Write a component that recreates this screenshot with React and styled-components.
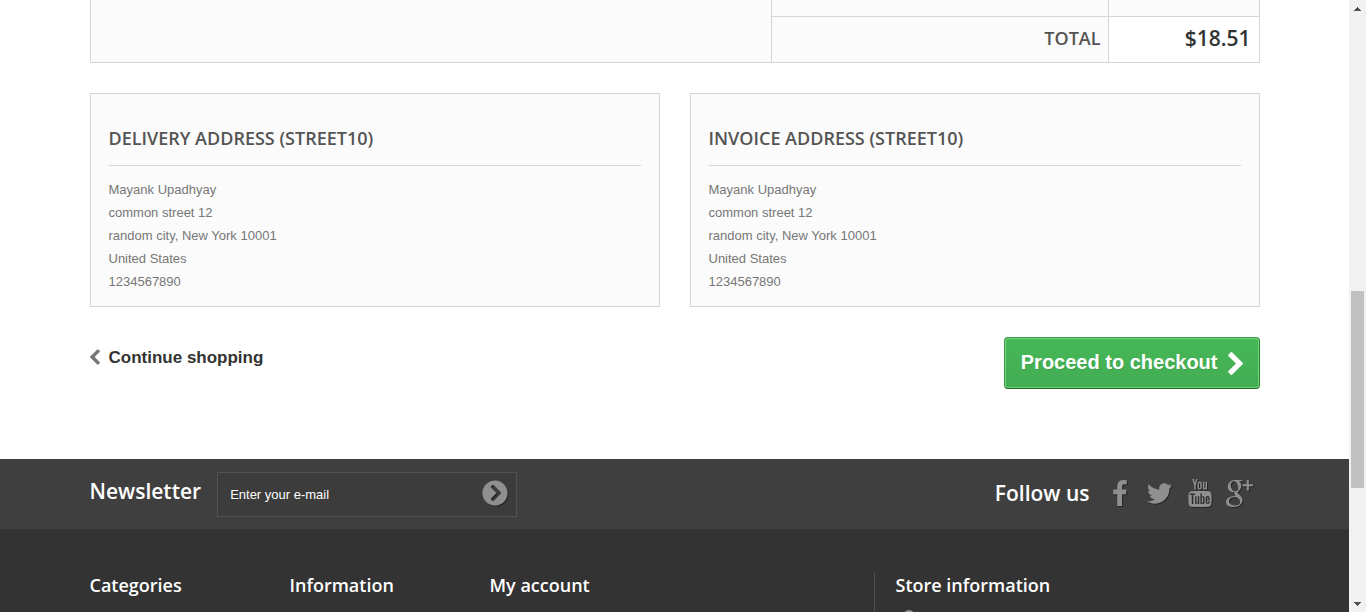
import React from "react";
import styled, { createGlobalStyle } from "styled-components";
import {
  FaTwitter,
  FaChevronCircleRight,
  FaMapMarkerAlt,
} from "react-icons/fa";
import { TfiYoutube, TfiGoogle } from "react-icons/tfi";

const sans = '"Liberation Sans", Arial, Helvetica, sans-serif';
const display = '"Open Sans", "Noto Sans", sans-serif';
const line = "#d6d4d4";

const GlobalStyle = createGlobalStyle`
  *, *::before, *::after { box-sizing: border-box; }
  body {
    margin: 0;
    background: #fff;
    color: #777;
    font: normal 13px/18px ${sans};
  }
  h3, h4, p { margin: 0; }
`;

const Shell = styled.div`
  display: flex;
  height: 100vh;
  overflow: hidden;
`;

const Page = styled.div`
  flex: 1;
  min-width: 0;
  overflow: hidden;
`;

const Container = styled.div`
  max-width: 1170px;
  margin: 0 auto;
`;

const Main = styled.main`
  padding-bottom: 70px;
`;

const SummaryTable = styled.table`
  width: 100%;
  margin-top: -20px;
  table-layout: fixed;
  border-collapse: collapse;
  border: 1px solid ${line};
  background: #fbfbfb;
`;

const Column = styled.col`
  width: ${(p) => p.$width};
`;

const Cell = styled.td`
  height: ${(p) => (p.$total ? "46px" : "36px")};
  padding: ${(p) => (p.$total ? "0 8px 2px" : "0 9px 8px")};
  border: 1px solid ${line};
  text-align: right;
  vertical-align: middle;
  background: ${(p) => (p.$total ? "#fff" : "#fbfbfb")};
  font: ${(p) => (p.$total ? `600 21px/25px ${display}` : `13px/18px ${sans}`)};
  color: ${(p) => (p.$total ? "#333" : "#777")};
`;

const TotalLabel = styled.th`
  padding: 0 7px 4px;
  border: 1px solid ${line};
  text-align: right;
  font: 600 18px/22px ${display};
  color: #555454;
`;

const Addresses = styled.div`
  display: grid;
  grid-template-columns: 1fr 1fr;
  gap: 30px;
  margin: 30px 0;
`;

const AddressBox = styled.section`
  padding: 33px 18px 13px;
  border: 1px solid ${line};
  background: #fbfbfb;
  line-height: 23px;
`;

const AddressTitle = styled.h3`
  margin-bottom: 12px;
  padding-bottom: 16px;
  border-bottom: 1px solid ${line};
  font: 600 18px/22px ${display};
  color: #555454;
`;

const Actions = styled.div`
  display: flex;
  justify-content: space-between;
  align-items: flex-start;
`;

const ContinueLink = styled.a`
  display: flex;
  align-items: center;
  gap: 9px;
  padding-top: 10px;
  font: bold 17px/21px ${sans};
  color: #333;
  text-decoration: none;

  svg { margin-bottom: 2px; color: #777; }
`;

const CheckoutButton = styled.button`
  display: flex;
  align-items: center;
  gap: 10px;
  height: 52px;
  padding: 0 16px 2px;
  border: 1px solid;
  border-color: #399a49 #247f32 #1a6d27 #399a49;
  border-radius: 4px;
  background: linear-gradient(#46b857, #43ac53);
  box-shadow: inset 0 0 0 1px #74d578;
  font: bold 20px/24px ${sans};
  color: #fff;
  text-shadow: 1px 1px rgba(0, 0, 0, 0.1);

  svg { margin-top: 2px; }
`;

const NewsletterBar = styled.div`
  background: #3f3f3f;
`;

const BarRow = styled(Container)`
  display: flex;
  justify-content: space-between;
  height: 70px;
`;

const NewsletterForm = styled.form`
  display: flex;
  align-items: flex-start;
  gap: 16px;
  padding-top: 13px;
`;

const BarTitle = styled.label`
  padding-top: 7px;
  font: 600 21px/25px ${display};
  color: #fff;
`;

const EmailField = styled.div`
  display: flex;
  align-items: center;
  width: 300px;
  height: 45px;
  padding: 0 8px 4px 12px;
  border: 1px solid #515151;
  background: #3c3c3c;
`;

const EmailInput = styled.input`
  flex: 1;
  min-width: 0;
  padding: 5px 0 0;
  border: 0;
  outline: 0;
  background: transparent;
  font: 13px/18px ${sans};
  color: #fff;

  &::placeholder { color: #fff; opacity: 1; }
`;

const SendButton = styled.button`
  display: flex;
  padding: 0;
  border: 0;
  background: none;
  color: #908f8f;

  svg { filter: drop-shadow(1px 1px 0 rgba(0, 0, 0, 0.4)); }
`;

const Social = styled.div`
  display: flex;
  align-items: center;
  padding-bottom: 2px;
`;

const SocialTitle = styled.h4`
  margin-right: 10px;
  font: 600 21px/25px ${display};
  color: #fff;
`;

const SocialLink = styled.a`
  display: flex;
  justify-content: center;
  width: 40px;
  color: #908f8f;

  svg { filter: drop-shadow(1px 1px 0 rgba(0, 0, 0, 0.4)); }
`;

const Footer = styled.div`
  min-height: 100px;
  padding-top: 44px;
  background: #333;
`;

const FooterGrid = styled(Container)`
  display: grid;
  grid-template-columns: 200px 200px 1fr 386px;
`;

const FooterColumn = styled.section`
  ${(p) => p.$divided && "border-left: 1px solid #515151; padding-left: 21px;"}
  color: #908f8f;
`;

const FooterTitle = styled.h4`
  padding-bottom: 13px;
  font: 600 18px/24px ${display};
  color: #fff;
`;

const StoreMark = styled.div`
  display: flex;
  padding-left: 5px;
`;

const ScrollBar = styled.div`
  display: flex;
  flex-direction: column;
  flex: none;
  width: 17px;
  background: #f1f1f1;
`;

const ScrollArrow = styled.svg`
  flex: none;
  width: 17px;
  height: 17px;
  fill: #505050;
`;

const Track = styled.div`
  flex: ${(p) => p.$share} 0 0;
`;

const Thumb = styled(Track)`
  margin: 0 2px;
  background: #c1c1c1;
`;

const ChevronLeft = () => (
  <svg width="10" height="16" viewBox="410 26 1036 1612" fill="currentColor" aria-hidden="true">
    <path d="M1427 301l-531 531 531 531q19 19 19 45t-19 45l-166 166q-19 19-45 19t-45-19l-742-742q-19-19-19-45t19-45l742-742q19-19 45-19t45 19l166 166q19 19 19 45t-19 45z" />
  </svg>
);

const ChevronRight = () => (
  <svg width="15" height="23" viewBox="346 26 1036 1612" fill="currentColor" aria-hidden="true">
    <path d="M1363 877l-742 742q-19 19-45 19t-45-19l-166-166q-19-19-19-45t19-45l531-531-531-531q-19-19-19-45t19-45l166-166q19-19 45-19t45 19l742 742q19 19 19 45t-19 45z" />
  </svg>
);

const Facebook = () => (
  <svg width="14" height="26" viewBox="479 0 864 1664" fill="currentColor" aria-hidden="true">
    <path d="M1343 12v264h-157q-86 0-116 36t-30 108v189h293l-39 296h-254v759h-306v-759h-255v-296h255v-218q0-186 104-288.5t277-102.5q147 0 228 12z" />
  </svg>
);

const Address = ({ title }) => (
  <AddressBox>
    <AddressTitle>{title}</AddressTitle>
    <p>Mayank Upadhyay</p>
    <p>common street 12</p>
    <p>random city, New York 10001</p>
    <p>United States</p>
    <p>1234567890</p>
  </AddressBox>
);

export default function App() {
  return (
    <Shell>
      <GlobalStyle />
      <Page>
        <Main>
          <Container>
            <SummaryTable>
              <colgroup>
                <Column />
                <Column $width="337px" />
                <Column $width="151px" />
              </colgroup>
              <tbody>
                <tr>
                  <Cell rowSpan={2} />
                  <Cell />
                  <Cell>$0.00</Cell>
                </tr>
                <tr>
                  <TotalLabel scope="row">TOTAL</TotalLabel>
                  <Cell $total>$18.51</Cell>
                </tr>
              </tbody>
            </SummaryTable>
            <Addresses>
              <Address title="DELIVERY ADDRESS (STREET10)" />
              <Address title="INVOICE ADDRESS (STREET10)" />
            </Addresses>
            <Actions>
              <ContinueLink href="#shop">
                <ChevronLeft />
                Continue shopping
              </ContinueLink>
              <CheckoutButton type="button">
                Proceed to checkout
                <ChevronRight />
              </CheckoutButton>
            </Actions>
          </Container>
        </Main>
        <footer>
          <NewsletterBar>
            <BarRow>
              <NewsletterForm>
                <BarTitle htmlFor="email">Newsletter</BarTitle>
                <EmailField>
                  <EmailInput id="email" type="email" placeholder="Enter your e-mail" />
                  <SendButton type="button" aria-label="Subscribe">
                    <FaChevronCircleRight size={26} />
                  </SendButton>
                </EmailField>
              </NewsletterForm>
              <Social>
                <SocialTitle>Follow us</SocialTitle>
                <SocialLink href="#facebook" aria-label="Facebook"><Facebook /></SocialLink>
                <SocialLink href="#twitter" aria-label="Twitter"><FaTwitter size={25} /></SocialLink>
                <SocialLink href="#youtube" aria-label="YouTube"><TfiYoutube size={28} /></SocialLink>
                <SocialLink href="#google" aria-label="Google Plus"><TfiGoogle size={27} /></SocialLink>
              </Social>
            </BarRow>
          </NewsletterBar>
          <Footer>
            <FooterGrid>
              <FooterColumn><FooterTitle>Categories</FooterTitle></FooterColumn>
              <FooterColumn><FooterTitle>Information</FooterTitle></FooterColumn>
              <FooterColumn><FooterTitle>My account</FooterTitle></FooterColumn>
              <FooterColumn $divided>
                <FooterTitle>Store information</FooterTitle>
                <StoreMark><FaMapMarkerAlt size={16} /></StoreMark>
              </FooterColumn>
            </FooterGrid>
          </Footer>
        </footer>
      </Page>
      <ScrollBar aria-hidden="true">
        <ScrollArrow viewBox="0 0 17 17"><path d="M8 7h1v1h1v1h1v1h1v1H5v-1h1V9h1V8h1z" /></ScrollArrow>
        <Track $share={274} />
        <Thumb $share={197} />
        <Track $share={107} />
        <ScrollArrow viewBox="0 0 17 17"><path d="M5 7h7v1h-1v1h-1v1H9v1H8v-1H7V9H6V8H5z" /></ScrollArrow>
      </ScrollBar>
    </Shell>
  );
}
